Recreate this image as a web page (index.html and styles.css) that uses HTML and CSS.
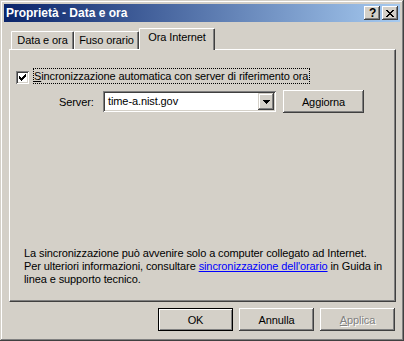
FILE: index.html
```html
<!DOCTYPE html>
<html lang="it">
<head>
<meta charset="utf-8">
<title>Proprietà - Data e ora</title>
<link rel="stylesheet" href="styles.css">
</head>
<body>
<div class="window">
  <div class="titlebar">
    <span class="title">Proprietà - Data e ora</span>
    <div class="tbtns">
      <div class="tbtn help">?</div>
      <div class="tbtn close">
        <svg width="8" height="7" viewBox="0 0 8 7" shape-rendering="crispEdges"><path fill="#000" d="M0 0h2v1H0z M6 0h2v1H6z M1 1h2v1H1z M5 1h2v1H5z M2 2h4v1H2z M3 3h2v1H3z M2 4h4v1H2z M1 5h2v1H1z M5 5h2v1H5z M0 6h2v1H0z M6 6h2v1H6z"/></svg>
      </div>
    </div>
  </div>
  <div class="content">
    <div class="tabs">
      <div class="tab t1">Data e ora</div>
      <div class="tab t2">Fuso orario</div>
      <div class="tab t3 active">Ora Internet</div>
    </div>
    <div class="panel">
      <div class="sync-row">
        <span class="checkbox">
          <svg width="7" height="7" viewBox="0 0 7 7" shape-rendering="crispEdges"><path fill="#000" d="M6 0h1v1H6z M5 1h2v1H5z M0 2h1v1H0z M4 2h3v1H4z M0 3h2v1H0z M3 3h3v1H3z M0 4h5v1H0z M1 5h3v1H1z M2 6h1v1H2z"/></svg>
        </span>
        <span class="focus"><u>S</u>incronizzazione automatica con server di riferimento ora</span>
      </div>
      <div class="server-row">
        <span class="lbl">Server:</span>
        <div class="combo">
          <span class="val">time-a.nist.gov</span>
          <span class="drop">
            <svg width="7" height="4" viewBox="0 0 7 4" shape-rendering="crispEdges"><path fill="#000" d="M0 0h7v1H0z M1 1h5v1H1z M2 2h3v1H2z M3 3h1v1H3z"/></svg>
          </span>
        </div>
        <div class="btn update">Aggiorna</div>
      </div>
      <p class="info">La sincronizzazione può avvenire solo a computer collegato ad Internet.<br>Per ulteriori informazioni, consultare <a class="link" href="#">sincronizzazione dell'orario</a> in Guida in<br>linea e supporto tecnico.</p>
    </div>
    <div class="actions">
      <div class="btn default">OK</div>
      <div class="btn">Annulla</div>
      <div class="btn disabled"><u>A</u>pplica</div>
    </div>
  </div>
</div>
</body>
</html>
```

FILE: styles.css
```css
* { box-sizing: border-box; }
html, body { margin: 0; padding: 0; }
body {
  background: #d4d0c8;
  font-family: "Liberation Sans", Arial, sans-serif;
  font-size: 11px;
  letter-spacing: -0.1px;
  color: #000;
}
.window {
  width: 404px;
  height: 341px;
  background: #d4d0c8;
  padding: 4px;
  display: flex;
  flex-direction: column;
  box-shadow: inset -1px -1px #404040, inset 1px 1px #d4d0c8, inset -2px -2px #808080, inset 2px 2px #fff;
}
.titlebar {
  height: 18px;
  flex: none;
  background: linear-gradient(to right, #0a246a, #a6caf0);
  display: flex;
  align-items: center;
  padding: 0 2px;
}
.title {
  flex: 1;
  color: #fff;
  font-weight: bold;
  font-size: 12px;
  letter-spacing: 0;
  line-height: 18px;
  white-space: nowrap;
}
.tbtns { display: flex; gap: 2px; }
.tbtn {
  width: 16px;
  height: 14px;
  background: #d4d0c8;
  box-shadow: inset -1px -1px #404040, inset 1px 1px #fff, inset -2px -2px #808080, inset 2px 2px #d4d0c8;
  display: flex;
  align-items: center;
  justify-content: center;
}
.tbtn.help {
  font-weight: bold;
  font-size: 12px;
  line-height: 14px;
  padding-left: 1px;
}
.tbtn svg { display: block; }
.content {
  margin-top: 6px;
  display: flex;
  flex-direction: column;
}
.tabs {
  display: flex;
  align-items: flex-end;
  height: 21px;
  margin-left: 7px;
}
.tab {
  height: 18px;
  border-top: 1px solid #fff;
  border-left: 1px solid #fff;
  border-right: 1px solid #404040;
  box-shadow: inset -1px 0 #808080;
  background: #d4d0c8;
  text-align: center;
  line-height: 16px;
  white-space: nowrap;
  clip-path: polygon(1px 0, calc(100% - 1px) 0, 100% 1px, 100% 100%, 0 100%, 0 1px);
}
.t1 { width: 63px; }
.t2 { width: 65px; }
.t3 { width: 76px; }
.tab.active {
  height: 22px;
  margin-bottom: -1px;
  position: relative;
  z-index: 1;
  line-height: 17px;
}
.panel {
  width: 387px;
  height: 253px;
  margin-left: 5px;
  border-top: 1px solid #fff;
  border-left: 1px solid #fff;
  border-right: 1px solid #404040;
  border-bottom: 1px solid #404040;
  box-shadow: inset -1px -1px #808080;
  padding: 18px 0 15px 6px;
  display: flex;
  flex-direction: column;
}
.sync-row {
  display: flex;
  align-items: flex-start;
  height: 16px;
}
.checkbox {
  width: 13px;
  height: 13px;
  margin-top: 3px;
  background: #fff;
  box-shadow: inset 1px 1px #808080, inset -1px -1px #fff, inset 2px 2px #404040, inset -2px -2px #d4d0c8;
  padding: 3px;
  display: block;
}
.checkbox svg { display: block; }
.focus {
  margin-left: 4px;
  height: 16px;
  line-height: 14px;
  border: 1px dotted #000;
  padding: 0 1px 0 0;
  white-space: nowrap;
}
.server-row {
  margin-top: 6px;
  height: 23px;
  display: flex;
  align-items: center;
}
.lbl {
  margin-left: 43px;
  width: 44px;
}
.combo {
  width: 173px;
  height: 21px;
  background: #fff;
  box-shadow: inset 1px 1px #808080, inset -1px -1px #fff, inset 2px 2px #404040, inset -2px -2px #d4d0c8;
  padding: 2px;
  display: flex;
  align-items: center;
}
.val {
  flex: 1;
  padding-left: 3px;
  line-height: 17px;
}
.drop {
  width: 16px;
  height: 17px;
  background: #d4d0c8;
  box-shadow: inset -1px -1px #404040, inset 1px 1px #d4d0c8, inset -2px -2px #808080, inset 2px 2px #fff;
  display: flex;
  align-items: center;
  justify-content: center;
}
.drop svg { display: block; }
.btn {
  width: 75px;
  height: 23px;
  background: #d4d0c8;
  box-shadow: inset -1px -1px #404040, inset 1px 1px #fff, inset -2px -2px #808080, inset 2px 2px #d4d0c8;
  display: flex;
  align-items: center;
  justify-content: center;
  white-space: nowrap;
}
.btn.update {
  width: 81px;
  margin-left: 7px;
}
.btn.default {
  box-shadow: inset 0 0 0 1px #000, inset 2px 2px #fff, inset -2px -2px #808080;
}
.btn.disabled {
  color: #808080;
  text-shadow: 1px 1px #fff;
}
.info {
  margin: auto 0 0 0;
  padding-left: 8px;
  line-height: 13px;
  white-space: nowrap;
}
.link {
  color: #0000ff;
  text-decoration: underline;
}
.actions {
  margin-top: 6px;
  display: flex;
  justify-content: flex-end;
  gap: 6px;
  padding-right: 5px;
}
```
